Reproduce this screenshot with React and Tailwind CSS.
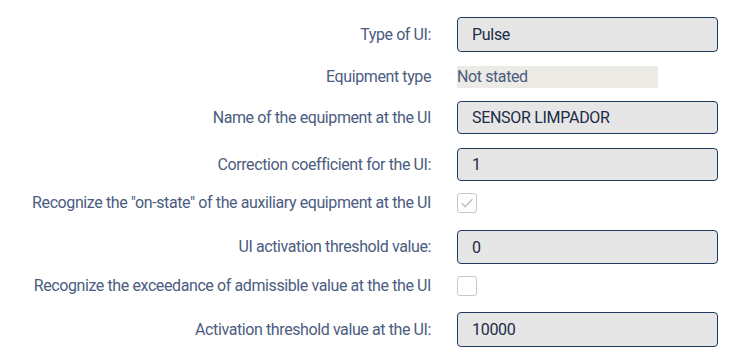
import React from 'react';

const labelCls = "w-[431px] shrink-0 text-right text-[16px] leading-[20px] tracking-[-0.4px] text-[#4b5c80] whitespace-nowrap";
const inputCls = "ml-[26px] w-[261px] rounded-[4px] border border-[#1f3a5f] bg-[#e6e6e6] px-[14px] text-[16px] tracking-[-0.3px] text-[#1c2b47] outline-none";

function Row({ label, className = "", children }) {
  return (
    <div className={"flex items-center " + className}>
      <div className={labelCls}>{label}</div>
      {children}
    </div>
  );
}

function Field({ value, h = "h-[35px]" }) {
  return <input readOnly value={value} className={inputCls + " " + h} />;
}

function Box({ checked }) {
  return (
    <div className="ml-[26px] flex h-[20px] w-[20px] items-center justify-center rounded-[3px] border border-[#c4c8d0] bg-white">
      {checked && (
        <svg width="14" height="14" viewBox="0 0 14 14" fill="none">
          <path d="M2 7.5l3.2 3.2L12 3.5" stroke="#b8bcc4" strokeWidth="1.3" strokeLinecap="round" strokeLinejoin="round" />
        </svg>
      )}
    </div>
  );
}

export default function App() {
  return (
    <div className="min-h-screen bg-white pt-[17px]" style={{ fontFamily: 'Roboto, "Liberation Sans", sans-serif' }}>
      <Row label="Type of UI:">
        <Field value="Pulse" />
      </Row>
      <Row label="Equipment type" className="mt-[14px]">
        <div className="ml-[26px] flex h-[22px] w-[201px] items-center bg-[#eceae4] text-[16px] tracking-[-0.4px] text-[#4b5c80]">Not stated</div>
      </Row>
      <Row label="Name of the equipment at the UI" className="mt-[13px]">
        <Field value="SENSOR LIMPADOR" h="h-[33px]" />
      </Row>
      <Row label="Correction coefficient for the UI:" className="mt-[14px]">
        <Field value="1" h="h-[33px]" />
      </Row>
      <Row label={'Recognize the "on-state" of the auxiliary equipment at the UI'} className="mt-[12px]">
        <Box checked />
      </Row>
      <Row label="UI activation threshold value:" className="mt-[17px]">
        <Field value="0" h="h-[34px]" />
      </Row>
      <Row label="Recognize the exceedance of admissible value at the the UI" className="mt-[12px]">
        <Box />
      </Row>
      <Row label="Activation threshold value at the UI:" className="mt-[16px]">
        <Field value="10000" />
      </Row>
    </div>
  );
}
